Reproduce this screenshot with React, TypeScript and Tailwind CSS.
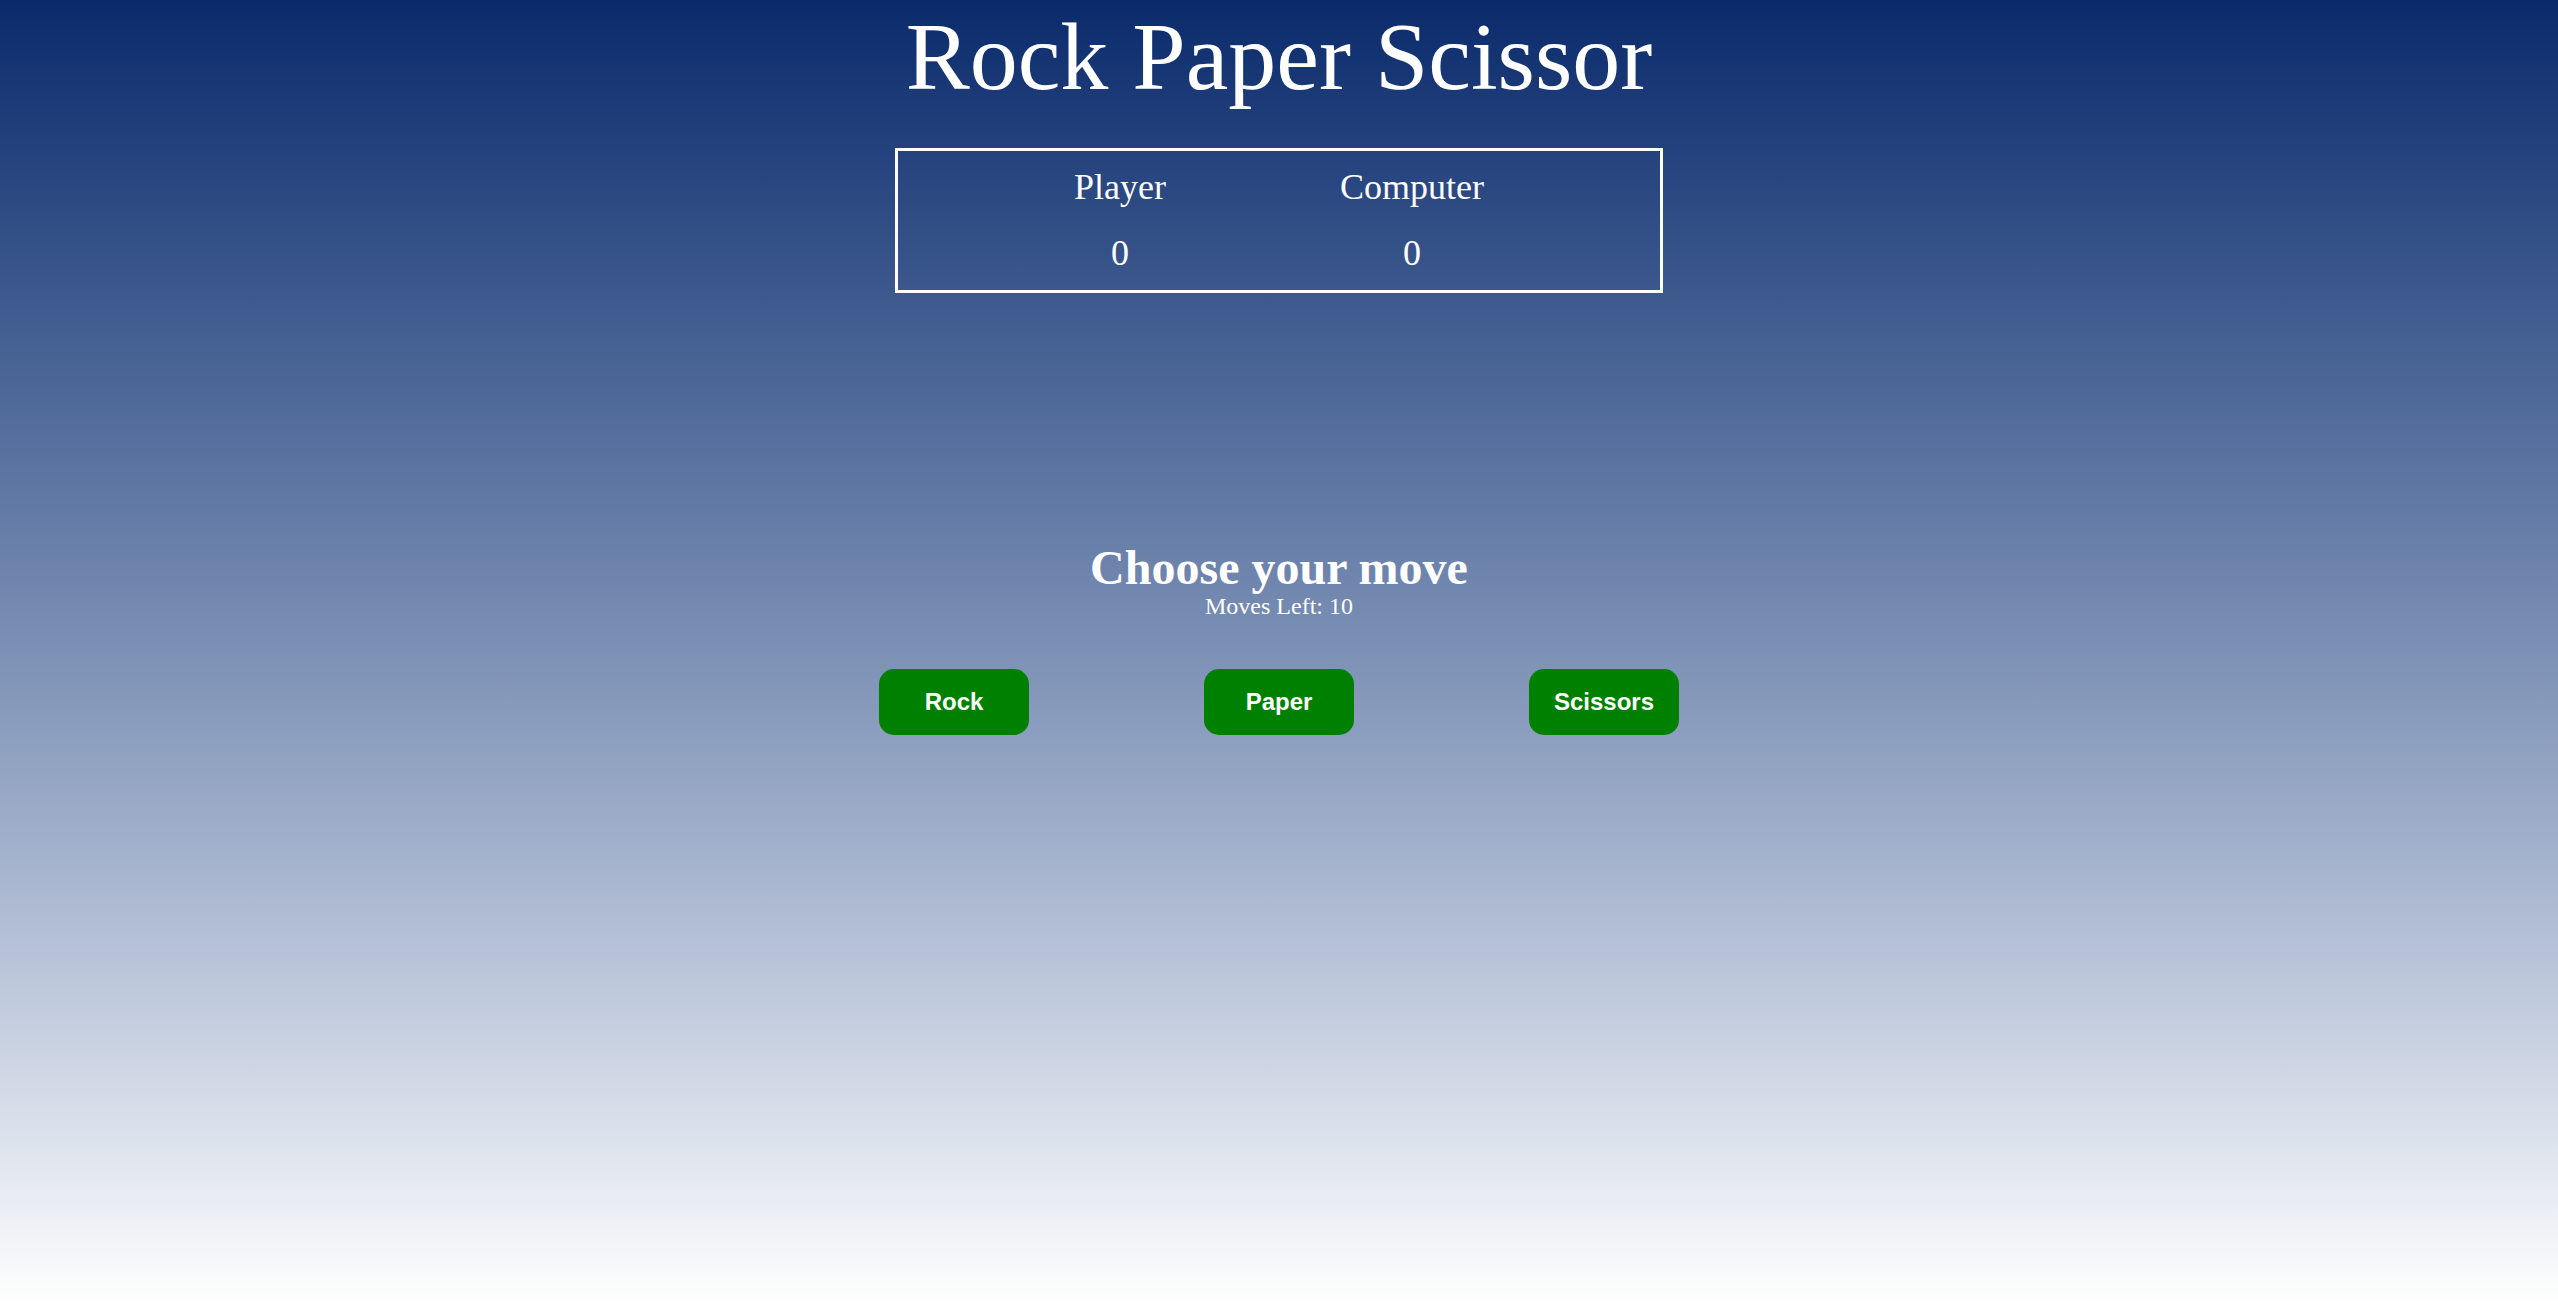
import { useState } from "react";

type Move = "Rock" | "Paper" | "Scissors";

const MOVES: Move[] = ["Rock", "Paper", "Scissors"];

export default function App() {
  const [playerScore, setPlayerScore] = useState(0);
  const [computerScore, setComputerScore] = useState(0);
  const [movesLeft, setMovesLeft] = useState(10);

  const play = (move: Move) => {
    if (movesLeft <= 0) return;
    const comp = MOVES[Math.floor(Math.random() * 3)];
    const idx = MOVES.indexOf(move);
    const cidx = MOVES.indexOf(comp);
    if (idx === cidx) {
      // tie
    } else if ((idx + 3 - cidx) % 3 === 1) {
      setPlayerScore((s) => s + 1);
    } else {
      setComputerScore((s) => s + 1);
    }
    setMovesLeft((m) => m - 1);
  };

  return (
    <div className="min-h-[1305px] w-full bg-gradient-to-b from-[#0a2a6b] to-white text-white font-['Liberation_Serif','Times_New_Roman',serif] flex flex-col items-center">
      {/* Title */}
      <h1 className="mt-[4px] text-[96px] leading-[106px] font-normal">Rock Paper Scissor</h1>

      {/* Score board */}
      <div className="mt-[38px] w-[30%] border-[3px] border-white py-4 flex justify-center gap-[174px] text-[36px] leading-[41px]">
        <div className="flex flex-col items-center gap-[25px]">
          <span>Player</span>
          <span>{playerScore}</span>
        </div>
        <div className="flex flex-col items-center gap-[25px]">
          <span>Computer</span>
          <span>{computerScore}</span>
        </div>
      </div>

      {/* Move picker */}
      <div className="mt-[250px] flex flex-col items-center">
        <h2 className="text-[48px] leading-[49px] font-bold">Choose your move</h2>
        <p className="text-[24px] leading-[28px]">Moves Left: {movesLeft}</p>
      </div>

      <div className="mt-[49px] flex justify-center gap-[175px]">
        {MOVES.map((m) => (
          <button
            key={m}
            onClick={() => play(m)}
            className="w-[150px] h-[66px] rounded-[15px] bg-[#008000] text-white text-[24px] font-bold font-['Liberation_Sans',Arial,sans-serif]"
          >
            {m}
          </button>
        ))}
      </div>
    </div>
  );
}
